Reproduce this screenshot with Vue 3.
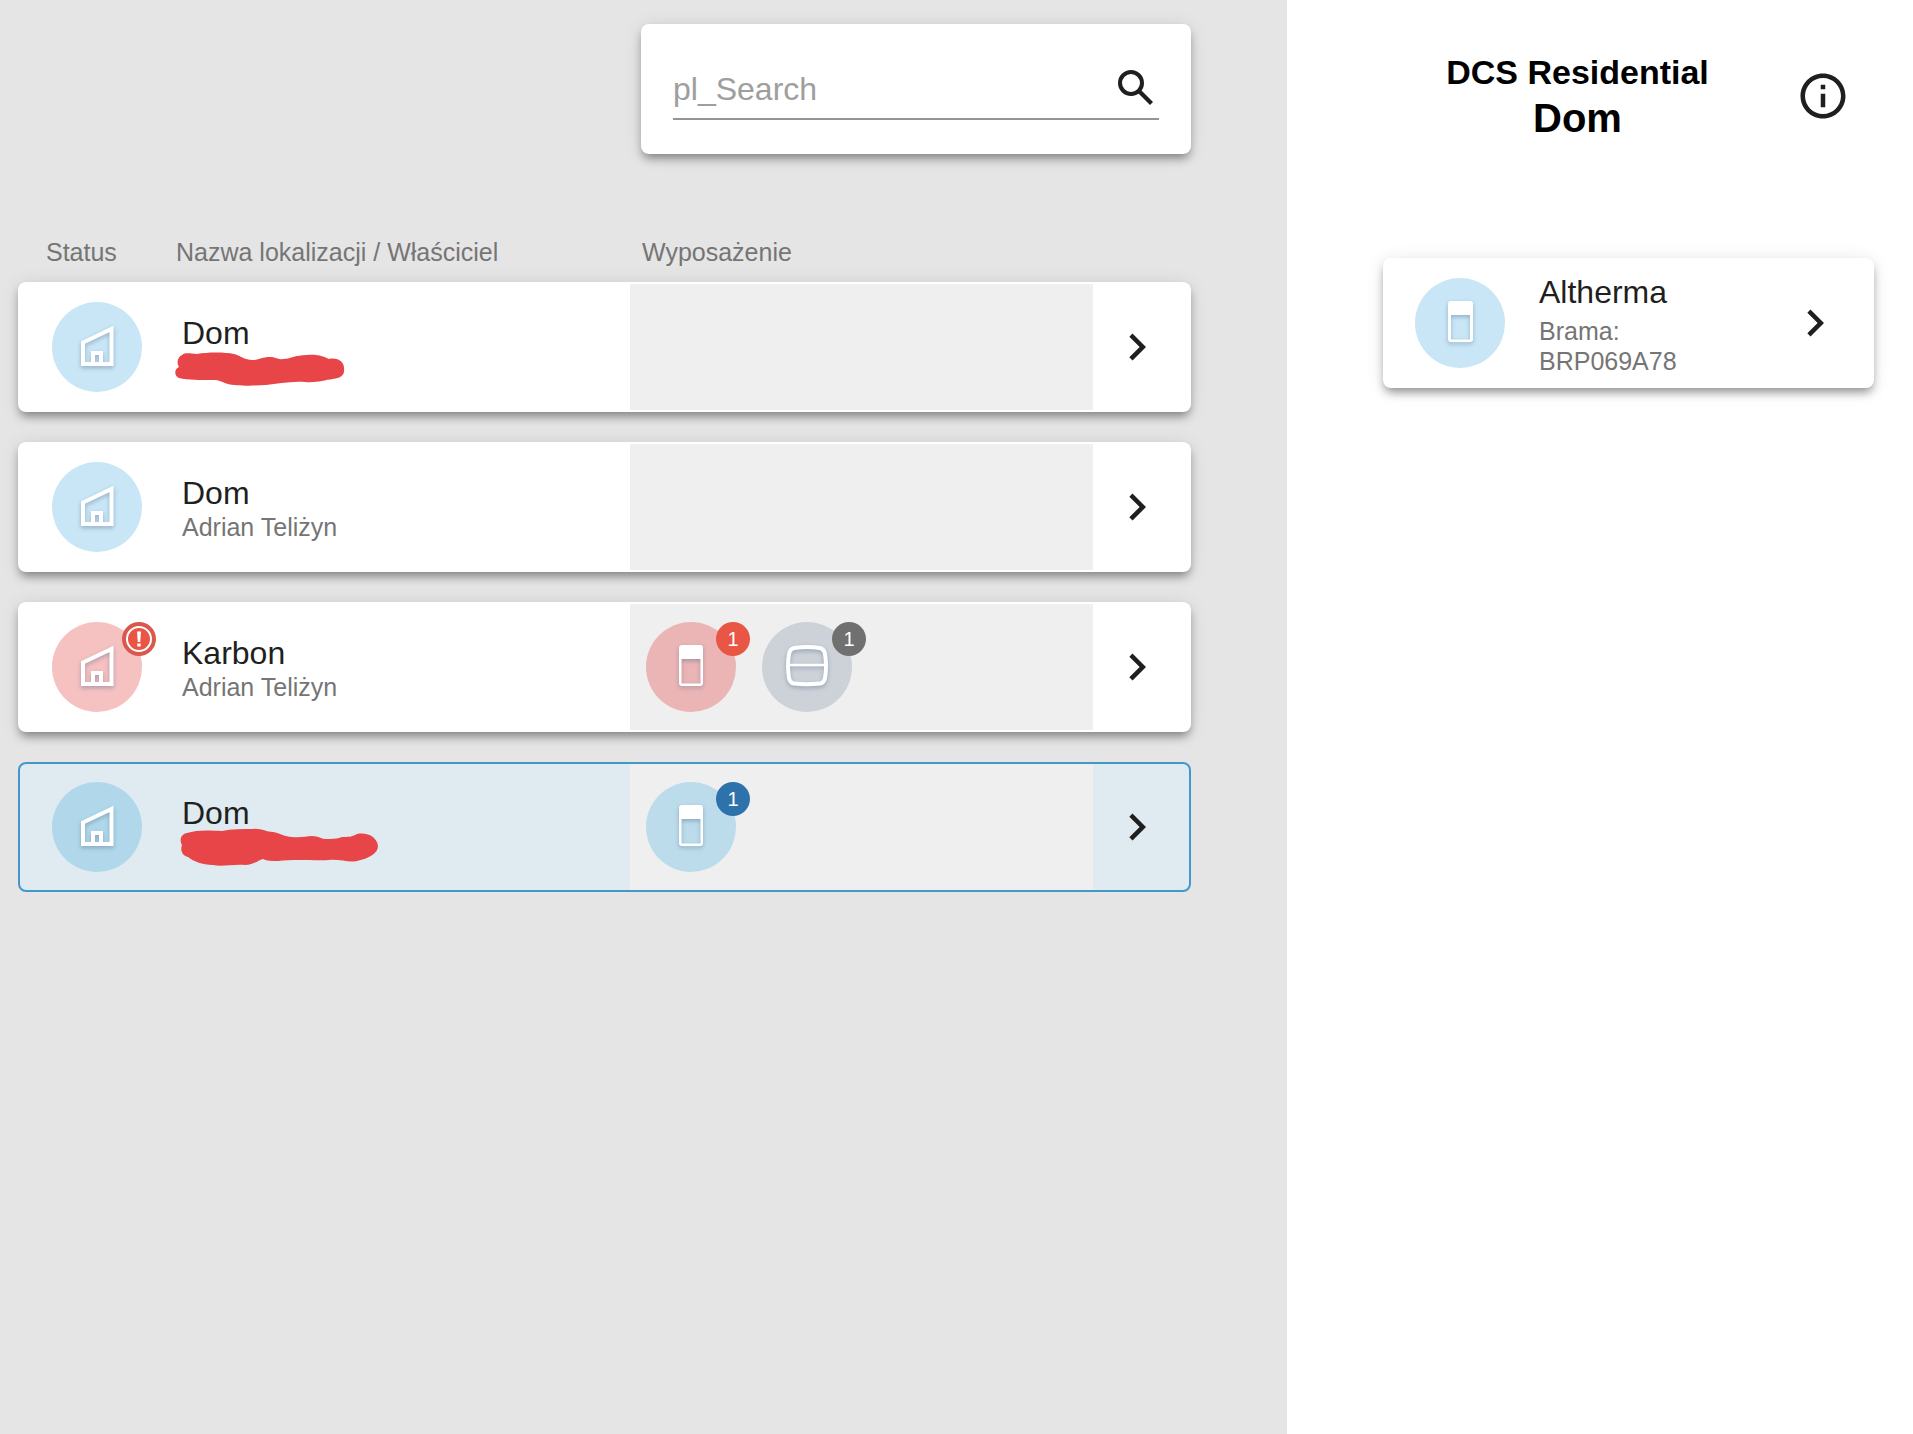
<script setup>
import { ref } from 'vue'

const query = ref('')

const locations = [
  {
    id: 1,
    name: 'Dom',
    owner: '',
    tone: 'blue',
    devices: [],
    redaction: {
      width: 170,
      height: 34,
      path: 'M7 3 C11 0 16 2 22 2 C32 0 50 0 59 2 C66 4 70 8 77 8 C84 8 87 5 95 5 C101 5 103 8 108 7 C115 7 120 3 132 3 C144 2 149 5 154 7 C163 5 169 10 169 16 C170 23 166 26 158 27 C149 28 142 31 130 30 C115 29 103 32 91 33 C78 34 61 34 53 32 C46 30 45 28 38 28 C25 28 13 28 4 26 C-1 24 -1 17 4 15 C1 10 3 5 7 3 Z'
    }
  },
  { id: 2, name: 'Dom', owner: 'Adrian Teliżyn', tone: 'blue', devices: [] },
  {
    id: 3,
    name: 'Karbon',
    owner: 'Adrian Teliżyn',
    tone: 'red',
    alert: true,
    devices: [
      { kind: 'tank', tone: 'red', count: 1 },
      { kind: 'unit', tone: 'grey', count: 1 }
    ]
  },
  {
    id: 4,
    name: 'Dom',
    owner: '',
    tone: 'blue',
    selected: true,
    devices: [{ kind: 'tank', tone: 'blue', count: 1 }],
    redaction: {
      width: 199,
      height: 39,
      path: 'M7 5 C16 2 27 2 42 3 C52 1 62 1 73 1 C81 0 86 4 93 4 C100 5 105 9 112 9 C121 10 126 8 132 8 C139 8 141 11 145 11 C151 11 157 11 162 9 C168 9 172 9 177 6 C189 4 197 10 198 18 C198 25 190 30 177 33 C169 35 160 31 149 32 C137 33 116 31 98 33 C92 33 87 33 83 31 C78 32 74 37 65 37 C53 36 42 39 33 37 C22 37 13 33 8 29 C2 28 0 22 2 17 C-1 12 1 6 7 5 Z'
    }
  }
]
</script>

<template>
  <div class="page">
    <main class="locations">
      <form class="search" role="search" @submit.prevent>
        <div class="search-field">
          <input v-model="query" type="search" placeholder="pl_Search" aria-label="pl_Search" />
          <button type="submit" class="icon-button" aria-label="pl_Search">
            <svg class="search-icon" viewBox="0 0 48 48" aria-hidden="true">
              <circle cx="20" cy="20" r="11" fill="none" stroke="#1f1f1f" stroke-width="4" />
              <path d="M27 30l3-3 12 12-3 3z" />
            </svg>
          </button>
        </div>
      </form>

      <div class="columns">
        <div class="columns-main">
          <span class="col-status">Status</span>
          <span>Nazwa lokalizacji / Właściciel</span>
        </div>
        <span class="col-devices">Wyposażenie</span>
      </div>

      <ul class="list">
        <li v-for="loc in locations" :key="loc.id">
          <a href="#" class="card row" :class="{ selected: loc.selected }" @click.prevent>
            <span class="place">
              <span class="disc" :class="loc.tone">
                <svg class="glyph" viewBox="0 0 90 90" aria-hidden="true">
                  <path d="M31 62V40.500L59.500 27V62Z" fill="none" stroke="#fff" stroke-width="4" />
                  <path d="M41 62V51h8v11" fill="none" stroke="#fff" stroke-width="4" />
                </svg>
                <span v-if="loc.alert" class="badge alert">
                  <svg viewBox="0 0 34 34" aria-hidden="true">
                    <circle cx="17" cy="17" r="12" fill="#e95646" stroke="#fff" stroke-width="2" />
                    <path d="M15 9.500h4l-.8 10.500h-2.400z M15.300 21.500h3.400v3h-3.400z" fill="#fff" />
                  </svg>
                </span>
              </span>
              <span class="label">
                <span class="name">{{ loc.name }}</span>
                <span class="owner">
                  {{ loc.owner }}
                  <svg
                    v-if="loc.redaction"
                    class="redaction"
                    :class="{ wide: loc.selected }"
                    :width="loc.redaction.width"
                    :height="loc.redaction.height"
                    aria-hidden="true"
                  >
                    <path :d="loc.redaction.path" fill="#e74548" />
                  </svg>
                </span>
              </span>
            </span>
            <span class="devices">
              <span v-for="device in loc.devices" :key="device.kind" class="disc" :class="device.tone">
                <svg v-if="device.kind === 'tank'" class="glyph" viewBox="0 0 90 90" aria-hidden="true">
                  <path fill="#fff" fill-rule="evenodd" d="M36 23h18a3 3 0 0 1 3 3v35a3 3 0 0 1-3 3H36a3 3 0 0 1-3-3V26a3 3 0 0 1 3-3zM35.500 37v24.500h19V37z" />
                </svg>
                <svg v-else class="glyph" viewBox="0 0 90 90" aria-hidden="true">
                  <path d="M32 26Q45 24 58 26Q62 27 63 32Q65 44 63 56Q62 61 58 61.500Q45 63 32 61.500Q28 61 27 56Q25 44 27 32Q28 27 32 26Z" fill="none" stroke="#fff" stroke-width="4" />
                  <path d="M27 43h36" stroke="#fff" stroke-width="2.500" />
                </svg>
                <span class="badge">{{ device.count }}</span>
              </span>
            </span>
            <span class="go">
              <svg class="chevron" viewBox="0 0 24 24" aria-hidden="true">
                <path d="M10 6L8.590 7.410 13.170 12l-4.580 4.590L10 18l6-6z" />
              </svg>
            </span>
          </a>
        </li>
      </ul>
    </main>

    <aside class="details">
      <header class="details-head">
        <div class="titles">
          <h2>DCS Residential</h2>
          <h1>Dom</h1>
        </div>
        <button type="button" class="icon-button" aria-label="Info">
          <svg class="info-icon" viewBox="0 0 24 24" aria-hidden="true">
            <path d="M11 7h2v2h-2zm0 4h2v6h-2zm1-9C6.480 2 2 6.480 2 12s4.480 10 10 10 10-4.480 10-10S17.520 2 12 2zm0 18c-4.410 0-8-3.590-8-8s3.590-8 8-8 8 3.590 8 8-3.590 8-8 8z" />
          </svg>
        </button>
      </header>

      <a href="#" class="card device" @click.prevent>
        <span class="disc blue">
          <svg class="glyph" viewBox="0 0 90 90" aria-hidden="true">
            <path fill="#fff" fill-rule="evenodd" d="M36 23h19a3 3 0 0 1 3 3v35a3 3 0 0 1-3 3H36a3 3 0 0 1-3-3V26a3 3 0 0 1 3-3zM36 37v24.500h19V37z" />
          </svg>
        </span>
        <span class="device-label">
          <span class="name">Altherma</span>
          <span class="gateway">Brama:<br />BRP069A78</span>
        </span>
        <svg class="chevron" viewBox="0 0 24 24" aria-hidden="true">
          <path d="M10 6L8.590 7.410 13.170 12l-4.580 4.590L10 18l6-6z" />
        </svg>
      </a>
    </aside>
  </div>
</template>

<style>
body {
  margin: 0;
  background: #fff;
}
</style>

<style scoped>
.page {
  display: grid;
  grid-template-columns: minmax(0, 1287fr) minmax(0, 626fr);
  min-height: 100vh;
  font-family: "Liberation Sans", Arial, sans-serif;
  color: #1f1f1f;
}

.locations {
  padding: 24px 96px 24px 18px;
  background: #e5e5e5;
}

.card {
  box-sizing: border-box;
  border: 2px solid transparent;
  border-radius: 8px;
  background: #fff;
  box-shadow: 0 6px 10px -2px rgba(0, 0, 0, 0.4), 0 2px 18px rgba(0, 0, 0, 0.1);
  color: inherit;
  text-decoration: none;
}

.search {
  box-sizing: border-box;
  width: 550px;
  max-width: 100%;
  height: 130px;
  margin-left: auto;
  padding: 32px;
  border-radius: 8px;
  background: #fff;
  box-shadow: 0 6px 10px -2px rgba(0, 0, 0, 0.4), 0 2px 18px rgba(0, 0, 0, 0.1);
}

.search-field {
  display: flex;
  align-items: center;
  height: 62px;
  border-bottom: 2px solid #949494;
}

.search-field input {
  flex: 1;
  min-width: 0;
  height: 60px;
  padding: 4px 0 0;
  border: 0;
  outline: 0;
  background: none;
  font: inherit;
  font-size: 32px;
  color: inherit;
}

.search-field input::placeholder {
  color: #9e9e9e;
  opacity: 1;
}

.icon-button {
  display: flex;
  padding: 0;
  border: 0;
  background: none;
  color: inherit;
  cursor: pointer;
}

.search-icon {
  width: 48px;
  height: 48px;
  fill: #1f1f1f;
}

.columns {
  display: grid;
  grid-template-columns: minmax(0, 610fr) minmax(0, 463fr) 96px;
  margin-top: 83px;
  padding: 0 2px;
  font-size: 25px;
  line-height: 30px;
  color: #757575;
}

.columns-main {
  display: flex;
  padding-left: 26px;
}

.col-status {
  width: 130px;
}

.col-devices {
  padding-left: 12px;
}

.list {
  display: flex;
  flex-direction: column;
  gap: 30px;
  margin: 15px 0 0;
  padding: 0;
  list-style: none;
}

.row {
  display: grid;
  grid-template-columns: minmax(0, 610fr) minmax(0, 463fr) 96px;
  height: 130px;
}

.row.selected {
  border-color: #4398ca;
  background: #dfeaf1;
  box-shadow: none;
}

.place {
  display: flex;
  align-items: center;
  gap: 40px;
  padding-left: 32px;
}

.disc {
  position: relative;
  flex: none;
  width: 90px;
  height: 90px;
  border-radius: 50%;
}

.disc.blue {
  background: #c8e6f5;
}

.disc.red {
  background: #f5c1c1;
}

.selected .disc.blue {
  background: #b0d8ea;
}

.devices .disc.red {
  background: #ebb5b5;
}

.devices .disc.grey {
  background: #cdd2d9;
}

.selected .devices .disc.blue {
  background: #bcdceb;
}

.glyph {
  display: block;
  width: 90px;
  height: 90px;
  filter: drop-shadow(0 2px 2px rgba(70, 90, 130, 0.4));
}

.badge {
  position: absolute;
  top: 0;
  right: -14px;
  width: 34px;
  height: 34px;
  border-radius: 50%;
  font-size: 20px;
  line-height: 34px;
  text-align: center;
  color: #fff;
}

.badge svg {
  display: block;
  width: 34px;
  height: 34px;
}

.red .badge {
  background: #e95646;
}

.red .badge.alert {
  background: #d9574c;
}

.grey .badge {
  background: #707070;
}

.blue .badge {
  background: #2e72ab;
}

.label,
.device-label {
  display: flex;
  flex-direction: column;
}

.label {
  padding-top: 2px;
}

.name {
  font-size: 32px;
  line-height: 38px;
}

.owner {
  position: relative;
  min-height: 30px;
  font-size: 25px;
  line-height: 30px;
  color: #757575;
}

.redaction {
  position: absolute;
  top: 0;
  left: -7px;
}

.redaction.wide {
  top: -4px;
  left: -2px;
}

.devices {
  display: flex;
  align-items: center;
  gap: 26px;
  padding-left: 16px;
  background: #efefef;
}

.go {
  display: flex;
  align-items: center;
  padding-left: 17px;
}

.chevron {
  flex: none;
  width: 54px;
  height: 54px;
  fill: #1f1f1f;
}

.details {
  padding: 50px 39px 24px 96px;
  background: #fff;
}

.details-head {
  display: flex;
  align-items: center;
  justify-content: space-between;
  margin: 0 24px 0 -24px;
}

.titles {
  flex: 1;
  text-align: center;
  color: #000;
}

.titles h1,
.titles h2 {
  margin: 0;
  font-weight: 700;
}

.titles h2 {
  font-size: 34px;
  line-height: 44px;
}

.titles h1 {
  font-size: 40px;
  line-height: 48px;
}

.info-icon {
  width: 54px;
  height: 54px;
  fill: #1f1f1f;
}

.device {
  display: flex;
  align-items: center;
  height: 130px;
  margin-top: 116px;
  padding: 0 30px;
}

.device-label {
  flex: 1;
  padding: 2px 0 0 34px;
}

.device-label .name {
  margin-bottom: 5px;
}

.gateway {
  font-size: 25px;
  line-height: 30px;
  color: #757575;
}
</style>
